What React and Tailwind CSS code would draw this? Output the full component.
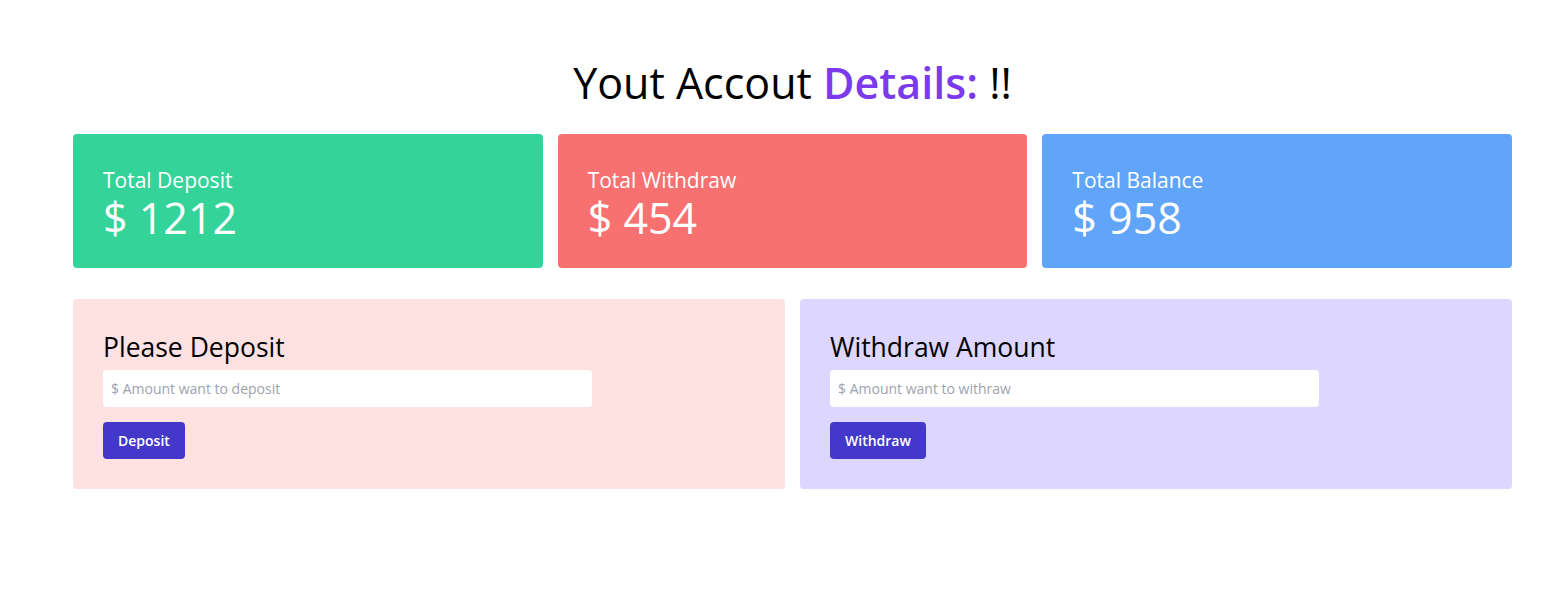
export default function App() {
  const font = { fontFamily: '"Open Sans", "Noto Sans", sans-serif' };
  return (
    <div className="min-h-[612px] bg-white pl-[73px] pr-[40px] pt-[59px]" style={font}>
      <h1 className="text-center text-[43px] leading-[48px] text-black">
        Yout Accout <span className="font-semibold text-[#7c3aed]">Details:</span> !!
      </h1>
      <div className="mt-[27px] grid grid-cols-3 gap-[15px]">
        <div className="h-[134px] rounded bg-[#34d399] px-[30px] pt-[33px] text-white">
          <div className="text-[21px] leading-[26px]">Total Deposit</div>
          <div className="text-[43px] leading-[50px]">$ 1212</div>
        </div>
        <div className="h-[134px] rounded bg-[#f87171] px-[30px] pt-[33px] text-white">
          <div className="text-[21px] leading-[26px]">Total Withdraw</div>
          <div className="text-[43px] leading-[50px]">$ 454</div>
        </div>
        <div className="h-[134px] rounded bg-[#60a5fa] px-[30px] pt-[33px] text-white">
          <div className="text-[21px] leading-[26px]">Total Balance</div>
          <div className="text-[43px] leading-[50px]">$ 958</div>
        </div>
      </div>
      <div className="mt-[31px] grid grid-cols-2 gap-[15px]">
        <div className="h-[190px] rounded bg-[#fee2e2] px-[30px] pt-[30px]">
          <h2 className="text-[26.5px] leading-[36px] text-black">Please Deposit</h2>
          <input
            className="mt-[5px] block h-[37px] w-[489px] rounded bg-white px-2 text-[14px] placeholder:text-[#9ca3af] outline-none"
            placeholder="$ Amount want to deposit"
          />
          <button className="mt-[15px] h-[37px] rounded bg-[#4338ca] px-[15px] text-[14px] font-semibold text-white">
            Deposit
          </button>
        </div>
        <div className="h-[190px] rounded bg-[#ddd6fe] px-[30px] pt-[30px]">
          <h2 className="text-[26.5px] leading-[36px] text-black">Withdraw Amount</h2>
          <input
            className="mt-[5px] block h-[37px] w-[489px] rounded bg-white px-2 text-[14px] placeholder:text-[#9ca3af] outline-none"
            placeholder="$ Amount want to withraw"
          />
          <button className="mt-[15px] h-[37px] rounded bg-[#4338ca] px-[15px] text-[14px] font-semibold text-white">
            Withdraw
          </button>
        </div>
      </div>
    </div>
  );
}
